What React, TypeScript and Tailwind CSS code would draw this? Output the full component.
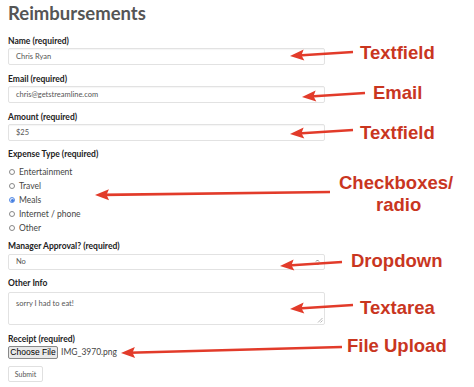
import React from "react";

const formFont = { fontFamily: "Lato, 'Open Sans', sans-serif" };

type Arrow = { tip: [number, number]; tail: [number, number] };

const arrows: Arrow[] = [
  { tip: [290, 56], tail: [353, 52] },
  { tip: [302, 97], tail: [365, 93] },
  { tip: [290, 134], tail: [353, 130] },
  { tip: [95, 195], tail: [330, 192] },
  { tip: [280, 266], tail: [342, 262] },
  { tip: [290, 309], tail: [353, 305] },
  { tip: [121, 353], tail: [342, 347] },
];

function arrowHead(a: Arrow) {
  const [tx, ty] = a.tip;
  const dx = a.tail[0] - tx;
  const dy = a.tail[1] - ty;
  const len = Math.hypot(dx, dy);
  const ux = dx / len;
  const uy = dy / len;
  const bx = tx + ux * 14;
  const by = ty + uy * 14;
  const px = -uy * 5.5;
  const py = ux * 5.5;
  return `${tx},${ty} ${bx + px},${by + py} ${bx + ux * -2.5},${by + uy * -2.5} ${bx - px},${by - py}`;
}

function Label({ children }: { children: React.ReactNode }) {
  return (
    <div className="h-[12px] text-[8.5px] font-bold leading-[12px] text-[#222]">
      {children}
    </div>
  );
}

function Field({ value }: { value: string }) {
  return (
    <div className="flex h-[17px] w-[317px] items-center rounded-[2px] border border-[#e2e2e2] bg-white px-[7px] text-[7.5px] text-[#555] shadow-[inset_0_1px_1px_rgba(0,0,0,0.04)]">
      {value}
    </div>
  );
}

function Radio({ label, checked = false }: { label: string; checked?: boolean }) {
  return (
    <div className="flex h-[14px] items-center gap-[4px] pl-[1px]">
      <span
        className={`flex h-[6px] w-[6px] items-center justify-center rounded-full border ${
          checked ? "border-[#5b8ee6] bg-[#dfe9fb]" : "border-[#888] bg-white"
        }`}
      >
        {checked && <span className="h-[3px] w-[3px] rounded-full bg-[#3f7be0]" />}
      </span>
      <span className="text-[8.5px] text-[#444]">{label}</span>
    </div>
  );
}

function Note({ x, y, children }: { x: number; y: number; children: React.ReactNode }) {
  return (
    <div
      className="absolute whitespace-nowrap text-[18.5px] font-bold leading-[20px] text-[#c9361f]"
      style={{ left: x, top: y - 10, fontFamily: "'Liberation Sans', Arial, sans-serif" }}
    >
      {children}
    </div>
  );
}

export default function App() {
  return (
    <div className="relative h-[387px] w-[474px] overflow-hidden bg-white" style={formFont}>
      <div className="flex flex-col pl-[8px]">
        <div className="flex h-[27px] items-center text-[18.5px] font-bold text-[#555]">Reimbursements</div>

        <div className="mt-[8px]"><Label>Name (required)</Label></div>
        <div className="mt-[1px]"><Field value="Chris Ryan" /></div>

        <div className="mt-[8px]"><Label>Email (required)</Label></div>
        <div className="mt-[1px]"><Field value="chris@getstreamline.com" /></div>

        <div className="mt-[8px]"><Label>Amount (required)</Label></div>
        <div className="mt-[1px]"><Field value="$25" /></div>

        <div className="mt-[7px]"><Label>Expense Type (required)</Label></div>
        <div className="mt-[5px] flex flex-col">
          <Radio label="Entertainment" />
          <Radio label="Travel" />
          <Radio label="Meals" checked />
          <Radio label="Internet / phone" />
          <Radio label="Other" />
        </div>

        <div className="mt-[5px]"><Label>Manager Approval? (required)</Label></div>
        <div className="mt-[2px] flex h-[16px] w-[317px] items-center justify-between rounded-[2px] border border-[#e2e2e2] bg-white px-[7px] text-[7.5px] text-[#555]">
          <span>No</span>
          <svg width="5" height="7" viewBox="0 0 5 7" className="mr-[-3px]">
            <path d="M1 2.5 L2.5 1 L4 2.5 M1 4.5 L2.5 6 L4 4.5" fill="none" stroke="#666" strokeWidth="0.8" />
          </svg>
        </div>

        <div className="mt-[7px]"><Label>Other Info</Label></div>
        <div className="relative mt-[3px] h-[33px] w-[317px] rounded-[2px] border border-[#e2e2e2] bg-white px-[7px] pt-[6px] text-[7.5px] leading-[9px] text-[#555]">
          sorry I had to eat!
          <svg width="6" height="6" viewBox="0 0 6 6" className="absolute bottom-[1px] right-[1px]">
            <path d="M5.5 1 L1 5.5 M5.5 3.5 L3.5 5.5" stroke="#999" strokeWidth="0.7" />
          </svg>
        </div>

        <div className="mt-[8px]"><Label>Receipt (required)</Label></div>
        <div className="mt-[1px] flex h-[13px] items-center gap-[3px]">
          <div
            className="flex h-[13px] w-[50px] items-center justify-center rounded-[2px] border border-[#888] bg-[#e9e9e9] text-[8.5px] text-black"
            style={{ fontFamily: "'Liberation Sans', Arial, sans-serif" }}
          >
            Choose File
          </div>
          <span className="text-[8.5px] text-[#444]">IMG_3970.png</span>
        </div>

        <div className="mt-[7px] flex h-[16px] w-[35px] items-center justify-center rounded-[2px] border border-[#e0e0e0] bg-white text-[7px] text-[#555]">
          Submit
        </div>
      </div>

      <svg className="absolute left-0 top-0" width="474" height="387">
        {arrows.map((a, i) => (
          <g key={i}>
            <line
              x1={a.tip[0] + 8}
              y1={a.tip[1] + ((a.tail[1] - a.tip[1]) * 8) / (a.tail[0] - a.tip[0])}
              x2={a.tail[0]}
              y2={a.tail[1]}
              stroke="#e23b2a"
              strokeWidth="2.6"
            />
            <polygon points={arrowHead(a)} fill="#e23b2a" />
          </g>
        ))}
      </svg>

      <Note x={360} y={53}>Textfield</Note>
      <Note x={373} y={93}>Email</Note>
      <Note x={360} y={133}>Textfield</Note>
      <Note x={339} y={183}>Checkboxes/</Note>
      <Note x={376} y={205}>radio</Note>
      <Note x={351} y={261}>Dropdown</Note>
      <Note x={360} y={308}>Textarea</Note>
      <Note x={347} y={346}>File Upload</Note>
    </div>
  );
}
